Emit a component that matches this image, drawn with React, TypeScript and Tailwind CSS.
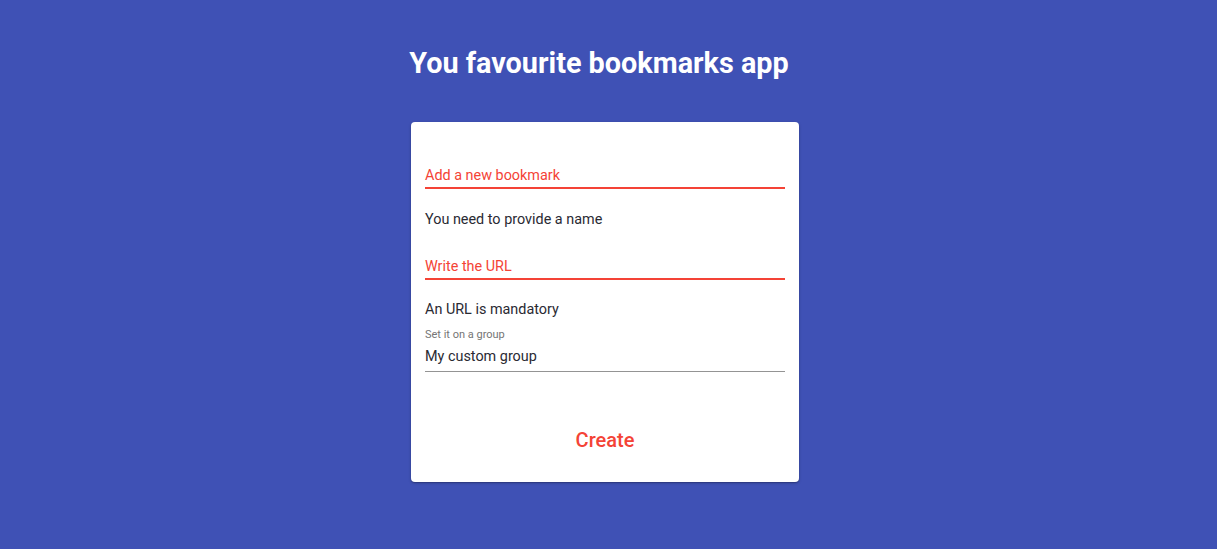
import React from 'react';

export default function App() {
  return (
    <div className="min-h-[549px] w-full bg-[#3F51B5] flex flex-col items-center" style={{ fontFamily: "Roboto, 'Noto Sans', sans-serif" }}>
      <h1 className="mt-[45px] mr-[19px] text-[28.8px] leading-[36px] font-bold text-white">
        You favourite bookmarks app
      </h1>

      <div className="mt-[41px] mr-[7px] w-[388px] bg-white rounded-[4px] shadow-[0_1px_3px_rgba(0,0,0,0.25),0_1px_1px_rgba(0,0,0,0.14)] pl-[14px] pr-[14px]">
        {/* name */}
        <div className="pt-[43px]">
          <div className="text-[14.4px] leading-5 text-[#F44336] border-b-2 border-[#F44336] pt-[1px] pb-[1px]">Add a new bookmark</div>
          <p className="mt-[21px] text-[14.4px] leading-5 text-[#2a2a33]">You need to provide a name</p>
        </div>

        {/* url */}
        <div className="mt-[26px]">
          <div className="text-[14.4px] leading-5 text-[#F44336] border-b-2 border-[#F44336] pt-[1px] pb-[1px]">Write the URL</div>
          <p className="mt-[20px] text-[14.4px] leading-5 text-[#2a2a33]">An URL is mandatory</p>
        </div>

        {/* group */}
        <div className="mt-[7px]">
          <label className="block text-[11px] leading-[14px] text-[#757575] pt-[1px]">Set it on a group</label>
          <div className="mt-[5px] text-[14.4px] leading-5 text-[#2a2a33] border-b border-[#949494] pb-[4px]">My custom group</div>
        </div>

        <div className="mt-[55px] pb-[29px] flex justify-center">
          <button className="text-[20px] leading-[26px] font-medium text-[#F44336]">Create</button>
        </div>
      </div>
    </div>
  );
}
